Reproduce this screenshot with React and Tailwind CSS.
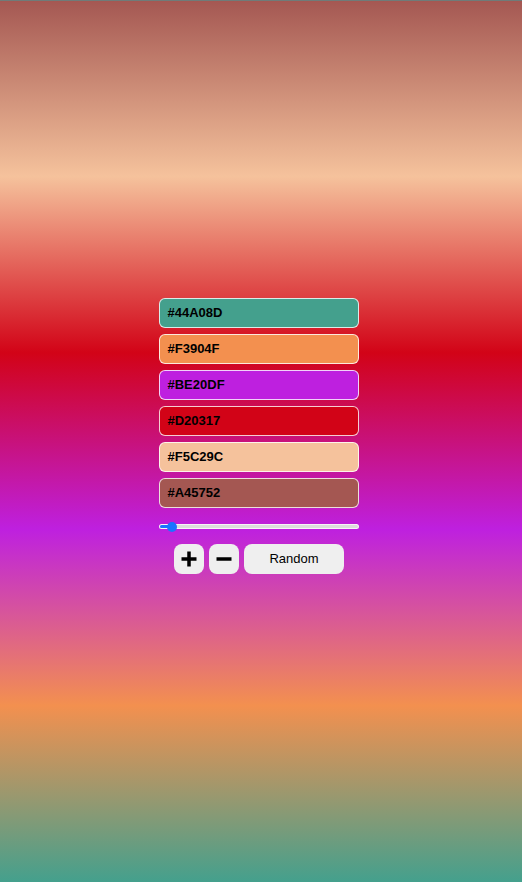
import React, { useState } from 'react';

const initial = ['#44A08D', '#F3904F', '#BE20DF', '#D20317', '#F5C29C', '#A45752'];

export default function App() {
  const [colors, setColors] = useState(initial);
  const [speed, setSpeed] = useState(4);

  const gradient = `linear-gradient(to top, ${colors.join(', ')})`;
  const pct = (speed - 1) / 99;

  const randomHex = () =>
    '#' + Math.floor(Math.random() * 0xffffff).toString(16).padStart(6, '0').toUpperCase();

  return (
    <div className="w-screen h-screen overflow-hidden font-['Liberation_Sans',Arial,sans-serif]" style={{ backgroundImage: gradient }}>
      <div className="h-px bg-[#6f7b79]" />
      <div className="h-[calc(100%-1px)] flex flex-col items-center justify-center pb-[12px] pr-[5px]">
        <div className="flex flex-col gap-1.5 w-[200px]">
          {colors.map((c, i) => (
            <div
              key={i}
              className="h-[30px] rounded-md border border-white/80 px-2 flex items-center text-[13px] font-bold text-black"
              style={{ backgroundColor: c }}
            >
              {c}
            </div>
          ))}
        </div>
        <div className="relative w-[200px] h-[16px] mt-[11px] flex items-center">
          <div className="w-full h-[5px] rounded-full bg-[#dcdcdc] border border-white/70 overflow-hidden">
            <div className="h-full bg-[#1a73ff]" style={{ width: `${5 + pct * 190}px` }} />
          </div>
          <div
            className="absolute top-[3px] w-[10px] h-[10px] rounded-full bg-[#1a73ff]"
            style={{ left: `${8 + pct * 182 - 5}px` }}
          />
          <input
            type="range"
            min="1"
            max="100"
            value={speed}
            onChange={(e) => setSpeed(Number(e.target.value))}
            className="absolute inset-0 w-full opacity-0 cursor-pointer"
          />
        </div>
        <div className="flex gap-[5px] mt-[9px] pl-px">
          <button
            onClick={() => setColors([...colors, randomHex()])}
            className="w-[30px] h-[30px] rounded-lg bg-[#efefef] flex items-center justify-center"
          >
            <svg width="18" height="18" viewBox="0 0 18 18">
              <path d="M9 1.5v15M1.5 9h15" stroke="black" strokeWidth="3.5" />
            </svg>
          </button>
          <button
            onClick={() => colors.length > 2 && setColors(colors.slice(0, -1))}
            className="w-[30px] h-[30px] rounded-lg bg-[#efefef] flex items-center justify-center"
          >
            <svg width="18" height="18" viewBox="0 0 18 18">
              <path d="M1.5 9h15" stroke="black" strokeWidth="3.5" />
            </svg>
          </button>
          <button
            onClick={() => setColors(colors.map(randomHex))}
            className="w-[100px] h-[30px] rounded-lg bg-[#efefef] text-[13px] text-black"
          >
            Random
          </button>
        </div>
      </div>
    </div>
  );
}
